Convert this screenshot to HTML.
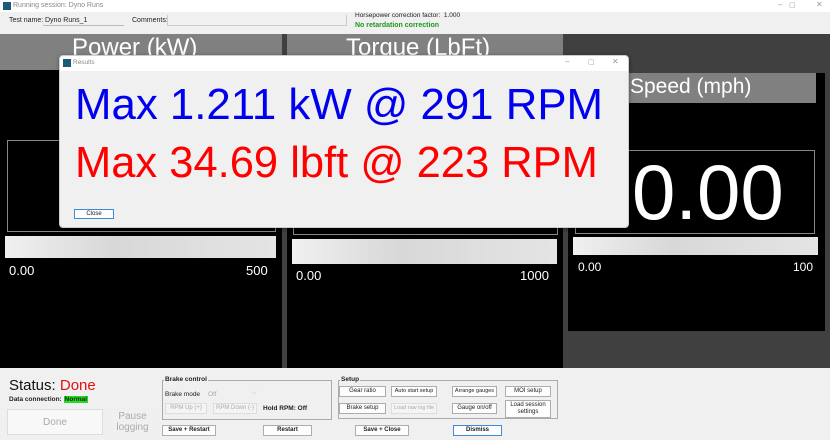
<!DOCTYPE html>
<html><head><style>
*{margin:0;padding:0;box-sizing:border-box}
body{width:830px;height:440px;overflow:hidden;position:relative;background:#f0f0f0;font-family:"Liberation Sans",sans-serif}
.a{position:absolute}
.t{font-size:7px;color:#222;white-space:nowrap}
.btn{position:absolute;border:1px solid #adadad;background:#fdfdfd;font-size:6px;color:#222;display:flex;align-items:center;justify-content:center;text-align:center;line-height:7px;white-space:nowrap;overflow:hidden}
.dis{color:#aaa;border-color:#ddd;background:#f4f4f4}
.b{font-weight:bold}
.wt{color:#fff;position:absolute;white-space:nowrap}
</style></head><body>
<div class="a" style="left:0;top:0;width:830px;height:12px;background:#fff"></div>
<div class="a" style="left:3px;top:2px;width:8px;height:8px;background:#1d5a7a"></div>
<div class="a t" style="left:13px;top:2px;color:#888">Running session: Dyno Runs</div>
<div class="a t" style="left:778px;top:0px;color:#999;font-size:8px">–</div>
<div class="a t" style="left:789px;top:1px;color:#999;font-size:7px">▢</div>
<div class="a t" style="left:816px;top:0px;color:#999;font-size:8px">✕</div>
<div class="a t" style="left:9px;top:17px">Test name:</div>
<div class="a" style="left:43px;top:15px;width:81px;height:11px;border-bottom:1px solid #bbb;background:#f0f0f0"></div>
<div class="a t" style="left:45px;top:17px">Dyno Runs_1</div>
<div class="a t" style="left:132px;top:17px">Comments:</div>
<div class="a" style="left:167px;top:15px;width:180px;height:11px;border:1px solid #ccc;border-top:none"></div>
<div class="a t" style="left:355px;top:12px;font-size:6.5px">Horsepower correction factor: &nbsp;1.000</div>
<div class="a t b" style="left:355px;top:22px;color:#1a9a1a;font-size:7px">No retardation correction</div>

<div class="a" style="left:0;top:34px;width:830px;height:334px;background:#404040"></div>
<div class="a" style="left:0;top:34px;width:282px;height:334px;background:#000"></div>
<div class="a" style="left:0;top:34px;width:282px;height:36px;background:#808080"></div>
<div class="wt" style="left:72px;top:34px;font-size:24px">Power (kW)</div>
<div class="a" style="left:287px;top:34px;width:276px;height:334px;background:#000"></div>
<div class="a" style="left:287px;top:34px;width:276px;height:36px;background:#808080"></div>
<div class="wt" style="left:346px;top:34px;font-size:24px">Torque (LbFt)</div>
<div class="a" style="left:568px;top:73px;width:257px;height:258px;background:#000"></div>
<div class="a" style="left:568px;top:73px;width:248px;height:30px;background:#808080"></div>
<div class="wt" style="left:630px;top:75px;font-size:21px">Speed (mph)</div>

<div class="a" style="left:7px;top:140px;width:269px;height:92px;border:1px solid #888"></div>
<div class="a" style="left:5px;top:236px;width:271px;height:22px;background:linear-gradient(90deg,#f0f0f0,#d8d8d8 40%,#e4e4e4)"></div>
<div class="wt" style="left:9px;top:263px;font-size:13px">0.00</div>
<div class="wt" style="left:246px;top:263px;font-size:13px">500</div>

<div class="a" style="left:293px;top:140px;width:265px;height:95px;border:1px solid #888"></div>
<div class="a" style="left:292px;top:239px;width:265px;height:25px;background:linear-gradient(90deg,#f0f0f0,#d8d8d8 40%,#e4e4e4)"></div>
<div class="wt" style="left:296px;top:268px;font-size:13px">0.00</div>
<div class="wt" style="left:520px;top:268px;font-size:13px">1000</div>

<div class="a" style="left:575px;top:150px;width:240px;height:84px;border:1px solid #888"></div>
<div class="wt" style="left:632px;top:150px;font-size:78px;line-height:84px">0.00</div>
<div class="a" style="left:573px;top:237px;width:245px;height:18px;background:linear-gradient(90deg,#f0f0f0,#d8d8d8 40%,#e4e4e4)"></div>
<div class="wt" style="left:578px;top:260px;font-size:12px">0.00</div>
<div class="wt" style="left:793px;top:260px;font-size:12px">100</div>

<!-- dialog -->
<div class="a" style="left:59px;top:55px;width:570px;height:173px;background:#f0f0f0;border:1px solid #ccc;border-radius:4px;box-shadow:0 1px 4px rgba(0,0,0,.4)"></div>
<div class="a" style="left:60px;top:56px;width:568px;height:15px;background:#fff;border-radius:4px 4px 0 0"></div>
<div class="a" style="left:63px;top:59px;width:8px;height:8px;background:#1d5a7a"></div>
<div class="a t" style="left:73px;top:59px;color:#888;font-size:6.5px">Results</div>
<div class="a t" style="left:565px;top:57px;color:#999;font-size:8px">–</div>
<div class="a t" style="left:588px;top:58px;color:#999;font-size:7px">▢</div>
<div class="a t" style="left:612px;top:57px;color:#999;font-size:8px">✕</div>
<div class="a" style="left:75px;top:81px;font-size:43.8px;color:#0000ee;white-space:nowrap;line-height:48px">Max 1.211 kW @ 291 RPM</div>
<div class="a" style="left:75px;top:139px;font-size:43.5px;color:#ff0000;white-space:nowrap;line-height:48px">Max 34.69 lbft @ 223 RPM</div>
<div class="btn" style="left:74px;top:209px;width:40px;height:10px;border-color:#3c8ad8">Close</div>

<!-- bottom -->
<div class="a" style="left:9px;top:377px;font-size:15px;color:#111;white-space:nowrap">Status: <span style="color:#e01010">Done</span></div>
<div class="a t b" style="left:9px;top:396px;font-size:6.5px">Data connection: <span style="background:#22dd22;padding:0 1px">Normal</span></div>
<div class="btn dis" style="left:7px;top:409px;width:96px;height:26px;font-size:10px;background:#f8f8f8">Done</div>
<div class="btn dis" style="left:110px;top:409px;width:45px;height:26px;font-size:10px;line-height:11px;border-color:#eee;background:#f0f0f0">Pause<br>logging</div>

<div class="a" style="left:162px;top:380px;width:170px;height:40px;border:1px solid #aaa"></div>
<div class="a t b" style="left:164px;top:376px;background:#f0f0f0;padding:0 1px;font-size:6.5px">Brake control</div>
<div class="a t" style="left:165px;top:391px;font-size:6.5px">Brake mode</div>
<div class="a t" style="left:208px;top:391px;color:#aaa;font-size:6.5px">Off</div>
<div class="a t" style="left:252px;top:390px;color:#bbb;font-size:6px">⌵</div>
<div class="btn dis" style="left:165px;top:403px;width:42px;height:11px">RPM Up (+)</div>
<div class="btn dis" style="left:213px;top:403px;width:44px;height:11px">RPM Down (-)</div>
<div class="a t b" style="left:263px;top:405px;font-size:6.5px">Hold RPM: Off</div>

<div class="a" style="left:338px;top:380px;width:220px;height:39px;border:1px solid #aaa"></div>
<div class="a t b" style="left:340px;top:376px;background:#f0f0f0;padding:0 1px;font-size:6.5px">Setup</div>
<div class="btn" style="left:339px;top:386px;width:47px;height:11px">Gear ratio</div>
<div class="btn" style="left:391px;top:386px;width:46px;height:11px;font-size:5.5px">Auto start setup</div>
<div class="btn" style="left:452px;top:386px;width:45px;height:11px;font-size:5.5px">Arrange gauges</div>
<div class="btn" style="left:505px;top:386px;width:46px;height:11px">MOI setup</div>
<div class="btn" style="left:339px;top:403px;width:47px;height:11px">Brake setup</div>
<div class="btn dis" style="left:391px;top:403px;width:46px;height:11px;font-size:5.5px">Load raw log file</div>
<div class="btn" style="left:452px;top:403px;width:45px;height:11px">Gauge on/off</div>
<div class="btn" style="left:505px;top:400px;width:46px;height:18px;white-space:normal">Load session<br>settings</div>

<div class="btn b" style="left:162px;top:425px;width:54px;height:11px">Save + Restart</div>
<div class="btn b" style="left:263px;top:425px;width:49px;height:11px">Restart</div>
<div class="btn b" style="left:355px;top:425px;width:54px;height:11px">Save + Close</div>
<div class="btn b" style="left:453px;top:425px;width:49px;height:11px;border-color:#3c8ad8">Dismiss</div>
</body></html>
